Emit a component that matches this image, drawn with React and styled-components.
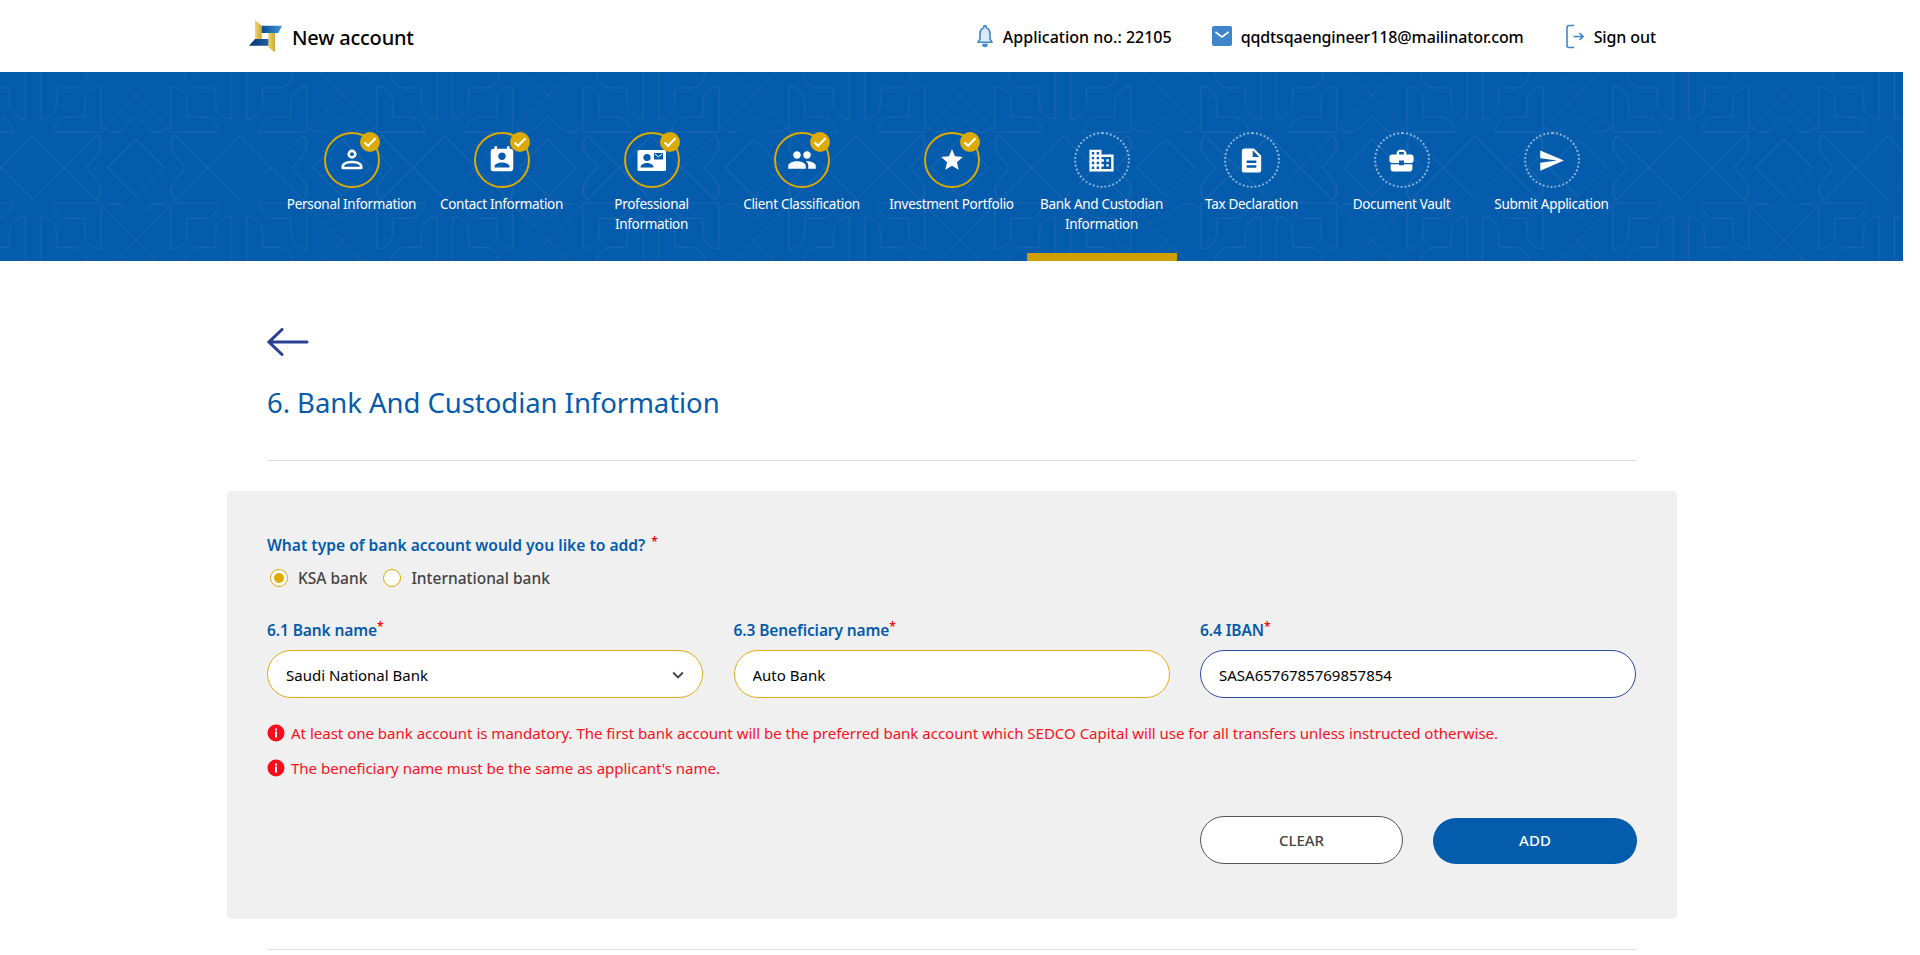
import styled, { createGlobalStyle } from "styled-components";
import {
  MdPermContactCalendar,
  MdPeople,
  MdStar,
  MdDomain,
  MdDescription,
  MdBusinessCenter,
  MdSend,
  MdKeyboardArrowDown,
} from "react-icons/md";

const BLUE = "#055bac";
const GOLD = "#dcaa00";

const GlobalStyle = createGlobalStyle`
  * { box-sizing: border-box; }
  html, body { margin: 0; height: 955px; overflow: hidden; background: #fff; }
  body { font-family: "Noto Sans", "Open Sans", sans-serif; color: #000; }
`;

const Page = styled.div`
  width: 1903px;
`;

const Header = styled.header`
  height: 72px;
  padding: 0 247px 0 249px;
  display: flex;
  align-items: center;
  justify-content: space-between;
`;

const Brand = styled.div`
  display: flex;
  align-items: center;
  gap: 10px;
  font-size: 20px;
  line-height: 28px;
  font-weight: 500;
  letter-spacing: -0.2px;
  span { padding-top: 3px; }
`;

const HeaderLinks = styled.div`
  display: flex;
  align-items: center;
`;

const HeaderLink = styled.div`
  display: flex;
  align-items: center;
  margin-left: ${(p) => p.$left || 0}px;
  gap: ${(p) => p.$gap || 10}px;
  font-size: 16px;
  font-weight: 500;
  letter-spacing: ${(p) => p.$tight || 0}px;
  span { padding-top: 2px; }
  svg { flex: none; }
`;

const Banner = styled.nav`
  position: relative;
  height: 189px;
  background: ${BLUE};
  overflow: hidden;
`;

const PatternLayer = styled.svg`
  position: absolute;
  inset: 0;
  width: 100%;
  height: 100%;
`;

const Steps = styled.div`
  position: relative;
  width: 1350px;
  height: 100%;
  margin: 0 auto;
  display: flex;
`;

const Step = styled.div`
  width: 150px;
  height: 100%;
  padding-top: 60px;
  display: flex;
  flex-direction: column;
  align-items: center;
  color: #fff;
  border-bottom: 8px solid ${(p) => (p.$active ? "#cf9f00" : "transparent")};
`;

const StepCircle = styled.div`
  position: relative;
  width: 56px;
  height: 56px;
  border-radius: 50%;
  display: flex;
  align-items: center;
  justify-content: center;
  border: ${(p) => (p.$done ? `2px solid ${GOLD}` : "2px dotted #8fb4da")};
`;

const DoneBadge = styled.span`
  position: absolute;
  top: -2px;
  right: -2px;
  width: 20px;
  height: 20px;
  border-radius: 50%;
  background: ${GOLD};
  display: flex;
  align-items: center;
  justify-content: center;
`;

const StepLabel = styled.div`
  margin-top: 6px;
  font-size: 13.5px;
  line-height: 20px;
  letter-spacing: -0.3px;
  text-align: center;
  white-space: pre-line;
`;

const Main = styled.main`
  padding: 67px 266px 0 267px;
`;

const BackArrow = styled.svg`
  display: block;
  width: 42px;
  height: 28px;
  color: #283f94;
`;

const Title = styled.h1`
  margin: 24px 0 0;
  height: 46px;
  font-size: 27.5px;
  line-height: 46px;
  font-weight: 400;
  color: ${BLUE};
  letter-spacing: -0.05px;
`;

const Divider = styled.hr`
  margin: ${(p) => p.$top}px 0 0;
  border: 0;
  border-top: 1px solid #ddd;
`;

const Panel = styled.section`
  margin: 30px -40px 0;
  padding: 43px 40px 54px;
  height: 428px;
  background: #f0f0f0;
  border-radius: 4px;
`;

const Question = styled.div`
  height: 22px;
  font-size: 15.6px;
  line-height: 22px;
  font-weight: 600;
  color: ${BLUE};
`;

const Star = styled.sup`
  color: #f00;
  font-size: 12px;
  line-height: 0;
  margin-left: ${(p) => p.$gap || 0}px;
  vertical-align: 5px;
`;

const RadioRow = styled.div`
  margin: 10px 0 0 3px;
  height: 24px;
  display: flex;
  align-items: center;
`;

const RadioDot = styled.span`
  width: 18px;
  height: 18px;
  border-radius: 50%;
  border: 1px solid ${GOLD};
  background: #fff;
  display: flex;
  align-items: center;
  justify-content: center;
  &::after {
    content: "";
    width: 10px;
    height: 10px;
    border-radius: 50%;
    background: ${(p) => (p.$on ? GOLD : "transparent")};
  }
`;

const RadioText = styled.span`
  margin: 0 16px 0 10px;
  font-size: 15.5px;
  font-weight: 500;
  color: #444;
`;

const FieldGrid = styled.div`
  margin-top: 30px;
  display: grid;
  grid-template-columns: repeat(3, 436px);
  column-gap: 30.5px;
`;

const FieldLabel = styled.label`
  display: block;
  height: 22px;
  margin-bottom: 8px;
  font-size: 15.5px;
  line-height: 20px;
  font-weight: 600;
  color: ${BLUE};
  letter-spacing: -0.1px;
`;

const Input = styled.input`
  display: block;
  width: 100%;
  height: 48px;
  padding: 1px 18px 0;
  border: 1px solid ${(p) => p.$border || "#e2ae14"};
  border-radius: 24px;
  background: #fff;
  outline: none;
  font: 400 15px "Noto Sans", sans-serif;
  color: #000;
`;

const SelectBox = styled.div`
  height: 48px;
  padding: 1px 13px 0 18px;
  border: 1px solid #e2ae14;
  border-radius: 24px;
  background: #fff;
  display: flex;
  align-items: center;
  justify-content: space-between;
  font-size: 15px;
  svg { color: #444; }
`;

const Notes = styled.div`
  margin-top: 23px;
  display: flex;
  flex-direction: column;
  gap: 11px;
`;

const Note = styled.div`
  height: 24px;
  display: flex;
  align-items: center;
  gap: 6px;
  font-size: 15px;
  color: #fb0f1c;
`;

const Buttons = styled.div`
  margin-top: 36px;
  height: 48px;
  display: flex;
  justify-content: flex-end;
  align-items: flex-end;
  gap: 30px;
`;

const Button = styled.button`
  width: ${(p) => (p.$primary ? 204 : 203)}px;
  height: ${(p) => (p.$primary ? 46 : 48)}px;
  padding: 0 0 ${(p) => (p.$primary ? 2 : 1)}px;
  border-radius: 24px;
  border: ${(p) => (p.$primary ? "0" : "1px solid #555")};
  background: ${(p) => (p.$primary ? BLUE : "#fff")};
  color: ${(p) => (p.$primary ? "#fff" : "#444")};
  font: 500 15px "Noto Sans", sans-serif;
`;

const Logo = () => (
  <svg width="33" height="33" viewBox="0 0 33 33">
    <defs>
      <linearGradient id="lg" x1="0" y1="0" x2="1" y2="0">
        <stop offset="0" stopColor="#f0d574" />
        <stop offset="1" stopColor="#cfa52e" />
      </linearGradient>
      <linearGradient id="lb" x1="0" y1="0" x2="1" y2="0">
        <stop offset="0" stopColor="#0c4a92" />
        <stop offset="1" stopColor="#3d9ad6" />
      </linearGradient>
      <linearGradient id="ld" x1="0" y1="0" x2="1" y2="0">
        <stop offset="0" stopColor="#0b2f6e" />
        <stop offset="1" stopColor="#1f74bd" />
      </linearGradient>
    </defs>
    <path d="M6 0l6.7 5.7V19H6z" fill="url(#lg)" />
    <path d="M12.7 5.7H33L29.3 13H12.7z" fill="url(#lb)" />
    <path d="M0 25.7L6 19h20v6.7z" fill="url(#ld)" />
    <path d="M19.3 13H26v19.3l-6.7-5z" fill="url(#lg)" />
  </svg>
);

const BellIcon = () => (
  <svg width="16" height="24" viewBox="0 0 16 24" fill="#8db6de" stroke="#3f85cb" strokeWidth="1.6" strokeLinejoin="round">
    <path d="M8 1.5c.9 0 1.3.6 1.3 1.4v.8C12 4.6 13 7 13 10v5l2 3.2H1L3 15v-5c0-3 1-5.4 3.7-6.3v-.8C6.7 2.1 7.1 1.5 8 1.5z" fill="#dbe8f5" />
    <path d="M6 20.5h4a2 2 0 0 1-4 0z" />
  </svg>
);

const MailIcon = () => (
  <svg width="20" height="20" viewBox="0 0 20 20">
    <rect width="20" height="20" rx="2" fill="#3f85cb" />
    <path d="M3.5 6l6.5 5 6.5-5" fill="none" stroke="#fff" strokeWidth="1.6" />
  </svg>
);

const SignOutIcon = () => (
  <svg width="18" height="25" viewBox="0 0 18 25" fill="none" stroke="#3f85cb" strokeWidth="1.6">
    <path d="M8 1.5H3a2 2 0 0 0-2 2v18a2 2 0 0 0 2 2h5" />
    <path d="M7.5 12.5H17M13.5 9l3.5 3.5-3.5 3.5" />
  </svg>
);

const PersonIcon = () => (
  <svg width="26" height="26" viewBox="0 0 24 24" fill="none" stroke="#fff" strokeWidth="2.4">
    <circle cx="12" cy="6.6" r="3" />
    <path d="M3.4 19.4v-1c0-3.2 4.4-4.6 8.6-4.6s8.6 1.4 8.6 4.6v1z" strokeLinejoin="round" />
  </svg>
);

const ProfessionalIcon = () => (
  <svg width="30" height="24" viewBox="0 0 30 24">
    <rect x="0.5" y="2" width="28.5" height="21" rx="1.5" fill="#fff" />
    <circle cx="10" cy="9.5" r="3.6" fill={BLUE} />
    <path d="M3.5 19.5c0-3 3.4-4.6 6.5-4.6s6.5 1.6 6.5 4.6z" fill={BLUE} />
    <rect x="17" y="5" width="9" height="6.5" fill={BLUE} />
    <path d="M17.8 6l3.7 2.8L25.2 6" fill="none" stroke="#fff" strokeWidth="1" />
  </svg>
);

const Check = () => (
  <svg width="14" height="14" viewBox="0 0 14 14" fill="none" stroke="#fff" strokeWidth="2">
    <path d="M1.5 7.4l3.6 3.4 7.4-7.6" />
  </svg>
);

const PatternCell = () => (
  <>
    <path d="M122 22V163A48 48 0 0 0 170 115V70H220A42 48 0 0 0 262 22" />
    <path d="M303 65A48 45 0 0 0 255 110V157H205A45 46 0 0 0 160 203H303Z" />
    <path d="M340 22L408 90L310 190Q345 215 372 190L408 155" />
    <path d="M100 215L290 405M100 403L290 213" />
    <path d="M290 210Q303 225 303 245Q303 265 258 309Q303 353 303 375Q303 395 290 408" />
    <path d="M408 223L322 309L408 395" />
  </>
);

// banner background, one tile drawn in quarters and mirrored
const BannerPattern = () => (
  <PatternLayer aria-hidden="true">
    <defs>
      <pattern
        id="bannerTile"
        patternUnits="userSpaceOnUse"
        width="618"
        height="567"
        patternTransform="translate(33.33 0) scale(0.33333)"
      >
        <g transform="translate(-100 -22)" fill="none" stroke="#1a67b1" strokeWidth="3">
          <PatternCell />
          <g transform="translate(816 0) scale(-1 1)"><PatternCell /></g>
          <g transform="translate(0 618) scale(1 -1)"><PatternCell /></g>
          <g transform="translate(816 618) scale(-1 -1)"><PatternCell /></g>
        </g>
      </pattern>
    </defs>
    <rect width="100%" height="100%" fill="url(#bannerTile)" />
  </PatternLayer>
);

const InfoDot = () => (
  <svg width="18" height="18" viewBox="0 0 18 18">
    <circle cx="9" cy="9" r="8.5" fill="#f90d1a" />
    <rect x="8" y="7.5" width="2" height="6" fill="#fff" />
    <rect x="8" y="4.5" width="2" height="2" fill="#fff" />
  </svg>
);

const steps = [
  { label: "Personal Information", icon: <PersonIcon />, done: true },
  { label: "Contact Information", icon: <MdPermContactCalendar size={30} />, done: true },
  { label: "Professional\nInformation", icon: <ProfessionalIcon />, done: true },
  { label: "Client Classification", icon: <MdPeople size={30} />, done: true },
  { label: "Investment Portfolio", icon: <MdStar size={26} />, done: true },
  { label: "Bank And Custodian\nInformation", icon: <MdDomain size={29} />, active: true },
  { label: "Tax Declaration", icon: <MdDescription size={29} /> },
  { label: "Document Vault", icon: <MdBusinessCenter size={29} /> },
  { label: "Submit Application", icon: <MdSend size={27} /> },
];

const App = () => {
  return (
    <Page>
      <GlobalStyle />
      <Header>
        <Brand>
          <Logo />
          <span>New account</span>
        </Brand>
        <HeaderLinks>
          <HeaderLink>
            <BellIcon />
            <span>Application no.: 22105</span>
          </HeaderLink>
          <HeaderLink $left={40} $gap={9} $tight={-0.12}>
            <MailIcon />
            <span>qqdtsqaengineer118@mailinator.com</span>
          </HeaderLink>
          <HeaderLink $left={42} $tight={-0.1}>
            <SignOutIcon />
            <span>Sign out</span>
          </HeaderLink>
        </HeaderLinks>
      </Header>

      <Banner>
        <BannerPattern />
        <Steps>
          {steps.map((step) => (
            <Step key={step.label} $active={step.active}>
              <StepCircle $done={step.done}>
                {step.icon}
                {step.done && (
                  <DoneBadge>
                    <Check />
                  </DoneBadge>
                )}
              </StepCircle>
              <StepLabel>{step.label}</StepLabel>
            </Step>
          ))}
        </Steps>
      </Banner>

      <Main>
        <BackArrow viewBox="0 0 42 28" fill="none" stroke="currentColor" strokeWidth="3" strokeLinecap="round">
          <path d="M40 14H2M15 1.5L2 14l13 12.5" />
        </BackArrow>
        <Title>6. Bank And Custodian Information</Title>
        <Divider $top={34} />

        <Panel>
          <Question>
            What type of bank account would you like to add? <Star $gap={2}>*</Star>
          </Question>
          <RadioRow>
            <RadioDot $on />
            <RadioText>KSA bank</RadioText>
            <RadioDot />
            <RadioText>International bank</RadioText>
          </RadioRow>

          <FieldGrid>
            <div>
              <FieldLabel>
                6.1 Bank name<Star>*</Star>
              </FieldLabel>
              <SelectBox>
                Saudi National Bank
                <MdKeyboardArrowDown size={22} />
              </SelectBox>
            </div>
            <div>
              <FieldLabel>
                6.3 Beneficiary name<Star>*</Star>
              </FieldLabel>
              <Input readOnly value="Auto Bank" />
            </div>
            <div>
              <FieldLabel>
                6.4 IBAN<Star>*</Star>
              </FieldLabel>
              <Input readOnly value="SASA6576785769857854" $border="#2d4a9e" />
            </div>
          </FieldGrid>

          <Notes>
            <Note>
              <InfoDot />
              At least one bank account is mandatory. The first bank account will be the preferred bank account which SEDCO Capital will use for all transfers unless instructed otherwise.
            </Note>
            <Note>
              <InfoDot />
              The beneficiary name must be the same as applicant's name.
            </Note>
          </Notes>

          <Buttons>
            <Button>CLEAR</Button>
            <Button $primary>ADD</Button>
          </Buttons>
        </Panel>
        <Divider $top={30} />
      </Main>
    </Page>
  );
};

export default App;
